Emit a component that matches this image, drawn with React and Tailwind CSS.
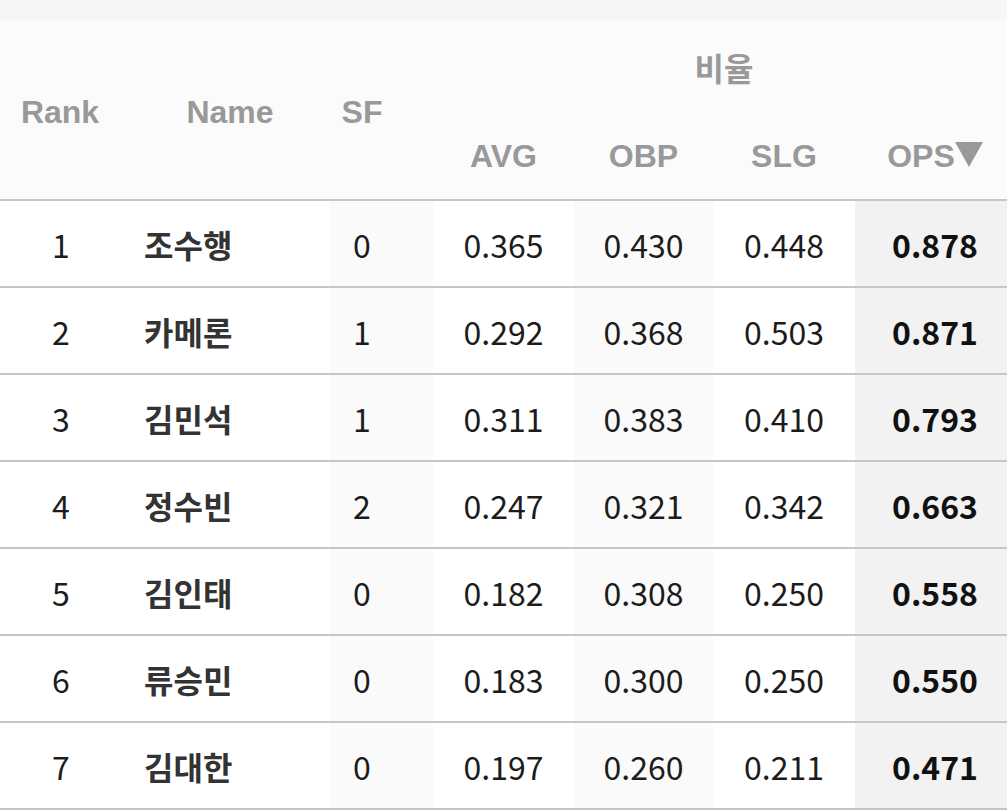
const rows = [
  { rank: 1, name: "조수행", sf: 0, avg: "0.365", obp: "0.430", slg: "0.448", ops: "0.878" },
  { rank: 2, name: "카메론", sf: 1, avg: "0.292", obp: "0.368", slg: "0.503", ops: "0.871" },
  { rank: 3, name: "김민석", sf: 1, avg: "0.311", obp: "0.383", slg: "0.410", ops: "0.793" },
  { rank: 4, name: "정수빈", sf: 2, avg: "0.247", obp: "0.321", slg: "0.342", ops: "0.663" },
  { rank: 5, name: "김인태", sf: 0, avg: "0.182", obp: "0.308", slg: "0.250", ops: "0.558" },
  { rank: 6, name: "류승민", sf: 0, avg: "0.183", obp: "0.300", slg: "0.250", ops: "0.550" },
  { rank: 7, name: "김대한", sf: 0, avg: "0.197", obp: "0.260", slg: "0.211", ops: "0.471" },
];

const headFont = { fontFamily: '"Liberation Sans", Arial, "Noto Sans CJK KR", sans-serif' };
const bodyFont = { fontFamily: '"Noto Sans CJK KR", "Noto Sans", sans-serif' };

export default function App() {
  return (
    <div className="w-[1007px] h-[811px] overflow-hidden bg-white">
      <div className="h-[20px] bg-[#f5f6f8]" />
      <table className="w-[1015px] table-fixed border-collapse">
        <colgroup>
          <col className="w-[122px]" />
          <col className="w-[208px]" />
          <col className="w-[103px]" />
          <col className="w-[141px]" />
          <col className="w-[139px]" />
          <col className="w-[142px]" />
          <col className="w-[160px]" />
        </colgroup>
        <thead className="bg-[#fbfbfb] text-[32px] font-bold leading-none text-[#999999]" style={headFont}>
          <tr className="h-[92px]">
            <th rowSpan={2} className="text-center align-middle pt-[4px] pr-[2px]">Rank</th>
            <th rowSpan={2} className="text-center align-middle pt-[4px] pl-[8px]">Name</th>
            <th rowSpan={2} className="text-center align-middle pt-[4px] pr-[39px]">SF</th>
            <th colSpan={4} className="text-center align-middle pt-[2px]" style={bodyFont}>
              비율
            </th>
          </tr>
          <tr className="h-[88px] border-b-2 border-[#c6c6c6]">
            <th className="text-center align-middle">AVG</th>
            <th className="text-center align-middle">OBP</th>
            <th className="text-center align-middle">SLG</th>
            <th className="text-center align-middle whitespace-nowrap">
              OPS
              <svg width="28" height="25" viewBox="0 0 28 25" className="inline-block align-baseline">
                <polygon points="0,0 28,0 14,25" fill="#999999" />
              </svg>
            </th>
          </tr>
        </thead>
        <tbody className="text-[32px] leading-none text-[#1c1c1c]" style={bodyFont}>
          {rows.map((r) => (
            <tr key={r.rank} className="h-[87px] border-b-2 border-[#c6c6c6]">
              <td className="text-center">{r.rank}</td>
              <td className="pl-[22px] font-bold text-[#333333]">{r.name}</td>
              <td className="bg-[#fafafa] text-center pr-[39px]">{r.sf}</td>
              <td className="text-center">{r.avg}</td>
              <td className="bg-[#fafafa] text-center">{r.obp}</td>
              <td className="text-center">{r.slg}</td>
              <td className="bg-[#f2f2f2] text-center font-bold text-[#111111]">{r.ops}</td>
            </tr>
          ))}
        </tbody>
      </table>
    </div>
  );
}
